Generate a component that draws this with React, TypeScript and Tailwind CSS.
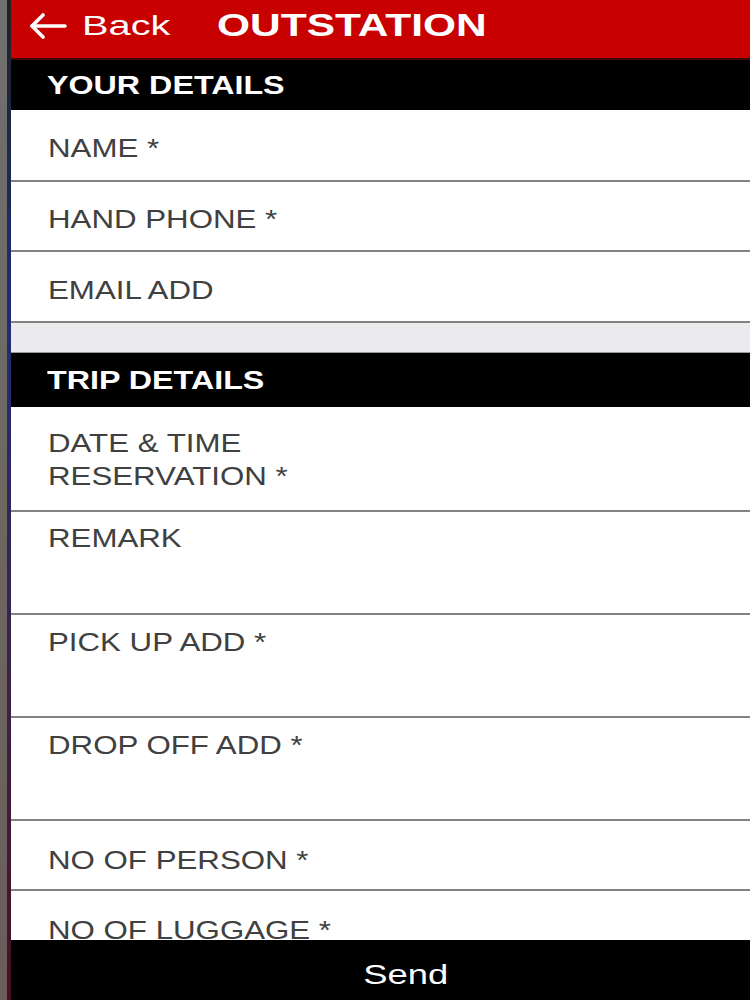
import React from 'react';

const font = "font-['Liberation_Sans',Arial,sans-serif]";

function Label({ children }: { children: React.ReactNode }) {
  return (
    <span className="inline-block origin-left scale-x-[1.25] text-[25px] leading-[33px] text-[#404040] whitespace-nowrap">
      {children}
    </span>
  );
}

function SectionBar({ title, className }: { title: string; className: string }) {
  return (
    <div className={`flex items-center bg-black pl-[36px] ${className}`}>
      <span className="inline-block origin-left scale-x-[1.24] text-[26px] font-bold leading-[30px] text-white whitespace-nowrap">
        {title}
      </span>
    </div>
  );
}

function Row({ label, className }: { label: React.ReactNode; className: string }) {
  return (
    <div className={`border-b-2 border-[#828282] bg-white pl-[37px] ${className}`}>
      <Label>{label}</Label>
    </div>
  );
}

export default function App() {
  return (
    <div className={`flex h-[1000px] w-[750px] overflow-hidden bg-white ${font}`}>
      {/* device bezel edge */}
      <div className="flex h-full shrink-0">
        <div className="w-[7px] bg-gradient-to-b from-[#707070] via-[#6d675f] to-[#6a5d5c]" />
        <div className="w-[4px] bg-gradient-to-b from-[#202020] via-[#1c2c78] via-30% to-[#4a0c22]" />
      </div>

      <div className="flex min-w-0 flex-1 flex-col">
        {/* header */}
        <div className="flex h-[58px] shrink-0 items-center bg-[#c80000] pb-[6px] pl-[18px] text-white">
          <svg width="38" height="26" viewBox="0 0 38 26" fill="none" stroke="white" strokeWidth="3.6" strokeLinecap="round" strokeLinejoin="round">
            <path d="M3 13H36" />
            <path d="M14 2L3 13L14 24" />
          </svg>
          <div className="ml-[15px] w-[135px]">
            <span className="inline-block origin-left scale-x-[1.42] text-[28px] leading-[32px]">Back</span>
          </div>
          <span className="inline-block origin-left scale-x-[1.37] text-[31px] font-bold leading-[34px] whitespace-nowrap">
            OUTSTATION
          </span>
        </div>

        <div className="h-[2px] shrink-0 bg-[#3a0a0a]" />

        <div className="flex min-h-0 flex-1 flex-col overflow-hidden">
          <SectionBar title="YOUR DETAILS" className="h-[50px] shrink-0" />
          <Row label="NAME *" className="h-[72px] shrink-0 pt-[22px]" />
          <Row label="HAND PHONE *" className="h-[70px] shrink-0 pt-[21px]" />
          <Row label="EMAIL ADD" className="h-[71px] shrink-0 pt-[22px]" />
          <div className="h-[30px] shrink-0 border-b border-[#9a9a9a] bg-[#ebebed]" />
          <SectionBar title="TRIP DETAILS" className="h-[54px] shrink-0" />
          <Row
            label={
              <>
                DATE &amp; TIME
                <br />
                RESERVATION *
              </>
            }
            className="h-[105px] shrink-0 pt-[20px]"
          />
          <Row label="REMARK" className="h-[103px] shrink-0 pt-[10px]" />
          <Row label="PICK UP ADD *" className="h-[103px] shrink-0 pt-[11px]" />
          <Row label="DROP OFF ADD *" className="h-[103px] shrink-0 pt-[11px]" />
          <Row label="NO OF PERSON *" className="h-[70px] shrink-0 pt-[23px]" />
          <div className="h-[70px] shrink-0 bg-white pl-[37px] pt-[27px]">
            <span className="inline-block origin-left scale-x-[1.25] text-[25px] leading-[24px] text-[#404040] whitespace-nowrap">
              NO OF LUGGAGE *
            </span>
          </div>
        </div>

        {/* send button */}
        <button className="flex h-[60px] shrink-0 items-center justify-center bg-black pl-[50px] pt-[10px] text-white">
          <span className="inline-block scale-x-[1.3] text-[28px] leading-[32px]">Send</span>
        </button>
      </div>
    </div>
  );
}
